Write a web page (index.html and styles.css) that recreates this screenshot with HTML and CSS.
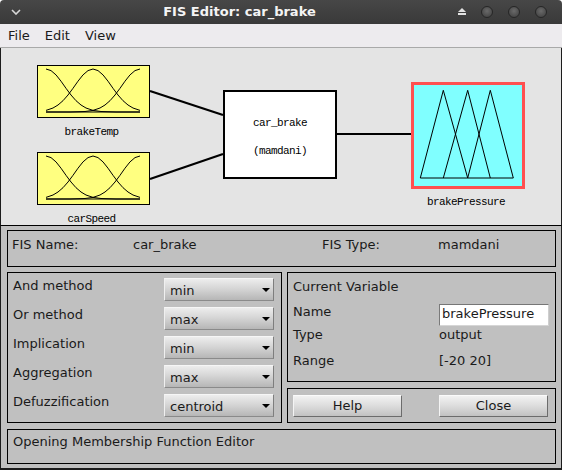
FILE: index.html
```html
<!DOCTYPE html>
<html>
<head>
<meta charset="utf-8">
<title>FIS Editor: car_brake</title>
<link rel="stylesheet" href="styles.css">
</head>
<body>
<div class="window">
  <div class="titlebar">
    <div class="tb-left">
      <svg class="chevron" width="10" height="6" viewBox="0 0 10 6"><polyline points="1,1 5,5 9,1" fill="none" stroke="#d8d8d8" stroke-width="1.6"/></svg>
    </div>
    <div class="title">FIS Editor: car_brake</div>
    <div class="controls">
      <svg class="eject" width="8" height="7" viewBox="0 0 8 7"><polygon points="0,4 4,0 8,4" fill="#e2e2e2"/><rect x="0" y="5" width="8" height="2" fill="#e2e2e2"/></svg>
      <span class="dot"></span>
      <span class="dot"></span>
      <span class="dot"></span>
    </div>
  </div>

  <div class="menubar">
    <span class="menu-item">File</span>
    <span class="menu-item">Edit</span>
    <span class="menu-item">View</span>
  </div>

  <div class="diagram">
    <svg class="wires" width="560" height="177" viewBox="0 0 560 177">
      <line x1="149" y1="43" x2="222" y2="67" stroke="#000" stroke-width="2.2"/>
      <line x1="149" y1="131" x2="222" y2="106" stroke="#000" stroke-width="2.2"/>
      <line x1="335" y1="86" x2="410" y2="86" stroke="#000" stroke-width="2.2"/>
    </svg>

    <div class="node node-temp">
      <div class="mf-box mf-in">
        <svg width="111" height="51" viewBox="0 0 111 51">
          <line x1="8" y1="46" x2="102" y2="46" stroke="#000" stroke-width="1"/>
          <polyline fill="none" stroke="#000" stroke-width="1" points="8,3 13,4.6 18,8.9 23,15.2 28,22.3 33,29 38,34.7 43,39 48,42 55,44.4 63,45.5 78,46 102,46"/>
          <polyline fill="none" stroke="#000" stroke-width="1" points="8,44.4 15,42 20,39 25,34.7 30,29 35,22.3 40,15.2 45,8.9 50,4.6 55,3 60,4.6 65,8.9 70,15.2 75,22.3 80,29 85,34.7 90,39 95,42 102,44.4"/>
          <polyline fill="none" stroke="#000" stroke-width="1" points="8,46 32,46 47,45.5 55,44.4 62,42 67,39 72,34.7 77,29 82,22.3 87,15.2 92,8.9 97,4.6 102,3"/>
        </svg>
      </div>
      <div class="node-label">brakeTemp</div>
    </div>

    <div class="node node-speed">
      <div class="mf-box mf-in">
        <svg width="111" height="51" viewBox="0 0 111 51">
          <line x1="8" y1="46" x2="102" y2="46" stroke="#000" stroke-width="1"/>
          <polyline fill="none" stroke="#000" stroke-width="1" points="8,3 13,4.6 18,8.9 23,15.2 28,22.3 33,29 38,34.7 43,39 48,42 55,44.4 63,45.5 78,46 102,46"/>
          <polyline fill="none" stroke="#000" stroke-width="1" points="8,44.4 15,42 20,39 25,34.7 30,29 35,22.3 40,15.2 45,8.9 50,4.6 55,3 60,4.6 65,8.9 70,15.2 75,22.3 80,29 85,34.7 90,39 95,42 102,44.4"/>
          <polyline fill="none" stroke="#000" stroke-width="1" points="8,46 32,46 47,45.5 55,44.4 62,42 67,39 72,34.7 77,29 82,22.3 87,15.2 92,8.9 97,4.6 102,3"/>
        </svg>
      </div>
      <div class="node-label">carSpeed</div>
    </div>

    <div class="node node-sys">
      <div class="sys-box">
        <div class="sys-line">car_brake</div>
        <div class="sys-line">(mamdani)</div>
      </div>
    </div>

    <div class="node node-out">
      <div class="mf-box mf-out">
        <svg width="108" height="101" viewBox="0 0 108 101">
          <line x1="6.3" y1="93" x2="99.3" y2="93" stroke="#000" stroke-width="1"/>
          <polyline fill="none" stroke="#000" stroke-width="1" points="6.3,93 29.3,5.3 53.7,93"/>
          <polyline fill="none" stroke="#000" stroke-width="1" points="29.3,93 53.7,5.3 76.3,93"/>
          <polyline fill="none" stroke="#000" stroke-width="1" points="53.7,93 76.3,5.3 99.3,93"/>
        </svg>
      </div>
      <div class="node-label out-label">brakePressure</div>
    </div>
  </div>

  <div class="panel">
    <div class="frame fis-frame">
      <span class="fis-c1">FIS Name:</span>
      <span class="fis-c2">car_brake</span>
      <span class="fis-c3">FIS Type:</span>
      <span class="fis-c4">mamdani</span>
    </div>

    <div class="mid">
      <div class="frame methods">
        <div class="mrow"><span class="mlabel">And method</span><div class="select"><span>min</span><i class="arrow"></i></div></div>
        <div class="mrow"><span class="mlabel">Or method</span><div class="select"><span>max</span><i class="arrow"></i></div></div>
        <div class="mrow"><span class="mlabel">Implication</span><div class="select"><span>min</span><i class="arrow"></i></div></div>
        <div class="mrow"><span class="mlabel">Aggregation</span><div class="select"><span>max</span><i class="arrow"></i></div></div>
        <div class="mrow"><span class="mlabel">Defuzzification</span><div class="select"><span>centroid</span><i class="arrow"></i></div></div>
      </div>

      <div class="rightcol">
        <div class="frame curvar">
          <div class="cv-title">Current Variable</div>
          <div class="cv-row cv-name"><span class="cv-label">Name</span><div class="input">brakePressure</div></div>
          <div class="cv-row cv-type"><span class="cv-label">Type</span><span>output</span></div>
          <div class="cv-row cv-range"><span class="cv-label">Range</span><span>[-20 20]</span></div>
        </div>
        <div class="frame buttons">
          <div class="btn">Help</div>
          <div class="btn btn-close">Close</div>
        </div>
      </div>
    </div>

    <div class="frame status">Opening Membership Function Editor</div>
  </div>
</div>
</body>
</html>
```

FILE: styles.css
```css
html, body {
  margin: 0;
  padding: 0;
  background: #ffffff;
}

.window {
  width: 562px;
  height: 470px;
  font-family: "DejaVu Sans", "Liberation Sans", sans-serif;
  font-size: 13px;
  color: #1a1a1a;
  overflow: hidden;
}

/* title bar */
.titlebar {
  height: 24px;
  display: flex;
  align-items: center;
  background: linear-gradient(#474747, #393939);
  border-radius: 4px 4px 0 0;
  color: #fff;
}
.tb-left {
  width: 24px;
  height: 24px;
  display: flex;
  align-items: center;
  padding-left: 11px;
  box-sizing: border-box;
}
.chevron { display: block; margin-top: -1px; }
.title {
  width: 431px;
  text-align: center;
  font-weight: bold;
  font-size: 13px;
  line-height: 24px;
  color: #f4f4f4;
}
.controls {
  flex: 1;
  display: flex;
  align-items: center;
  padding-left: 3px;
  gap: 15px;
}
.eject { display: block; margin-top: -1px; }
.dot {
  width: 12px;
  height: 12px;
  border-radius: 50%;
  box-sizing: border-box;
  border: 1px solid #262626;
  background: radial-gradient(circle at 50% 40%, #6a6a6a, #4a4a4a 70%);
}

/* menu */
.menubar {
  height: 24px;
  box-sizing: border-box;
  background: #edebee;
  border-bottom: 1px solid #a9a9a9;
  display: flex;
  gap: 15px;
  padding: 4px 0 0 8px;
  line-height: 15px;
  color: #1a1a1a;
}

/* diagram */
.diagram {
  position: relative;
  height: 178px;
  box-sizing: border-box;
  background: #e4e4e4;
  border-left: 1px solid #1c1c1c;
  border-right: 1px solid #1c1c1c;
  border-bottom: 1px solid #000;
}
.wires {
  position: absolute;
  left: 0;
  top: 0;
}
.node {
  position: absolute;
  display: flex;
  flex-direction: column;
  align-items: center;
}
.node-temp { left: 36px; top: 17px; }
.node-speed { left: 36px; top: 104px; }
.node-sys { left: 222px; top: 42px; }
.node-out { left: 410px; top: 34px; }

.mf-box {
  box-sizing: border-box;
}
.mf-box svg { display: block; }
.mf-in {
  width: 113px;
  height: 53px;
  background: #ffff80;
  border: 1px solid #000;
}
.mf-out {
  width: 114px;
  height: 107px;
  background: #80ffff;
  border: 3px solid #ff5050;
}
.node-label {
  font-family: "Liberation Mono", "DejaVu Sans Mono", monospace;
  font-size: 11px;
  letter-spacing: -0.6px;
  line-height: 13px;
  margin-top: 8px;
  margin-right: 4px;
  color: #000;
}
.out-label { margin-top: 7px; }

.sys-box {
  width: 114px;
  height: 89px;
  box-sizing: border-box;
  border: 2px solid #000;
  background: #fff;
  display: flex;
  flex-direction: column;
  align-items: center;
  justify-content: center;
  gap: 15px;
  padding-top: 5px;
}
.sys-line {
  font-family: "Liberation Mono", "DejaVu Sans Mono", monospace;
  font-size: 11px;
  letter-spacing: -0.6px;
  line-height: 13px;
  color: #000;
}

/* lower panel */
.panel {
  height: 244px;
  box-sizing: border-box;
  background: #c0c0c0;
  border-left: 1px solid #1c1c1c;
  border-right: 1px solid #1c1c1c;
  border-bottom: 2px solid #1c1c1c;
  padding: 4px 5px 4px 6px;
  line-height: 15px;
}
.frame {
  border: 1px solid #000;
  box-sizing: border-box;
}
.fis-frame {
  height: 37px;
  display: flex;
  padding: 6px 4px 0 4px;
}
.fis-c1 { width: 121px; }
.fis-c2 { width: 189px; }
.fis-c3 { width: 116px; }

.mid {
  display: grid;
  grid-template-columns: 275px 269px;
  gap: 5px;
  height: 151px;
  margin: 5px 0 6px;
}
.methods {
  display: flex;
  flex-direction: column;
  gap: 6px;
  padding: 5px 7px 0 5px;
}
.mrow {
  display: flex;
  height: 23px;
}
.mlabel {
  width: 151px;
  line-height: 15px;
}
.select {
  width: 110px;
  height: 23px;
  box-sizing: border-box;
  border: 1px solid;
  border-color: #f6f6f6 #7e7e7e #8a8a8a #f0f0f0;
  background: linear-gradient(#ededed, #d6d6d6 45%, #b6b6b6);
  display: flex;
  align-items: center;
  justify-content: space-between;
  padding: 0 3px 0 5px;
  line-height: 21px;
  padding-top: 1px;
}
.arrow {
  width: 0;
  height: 0;
  border-left: 4px solid transparent;
  border-right: 4px solid transparent;
  border-top: 4px solid #000;
  margin-top: -1px;
}

.rightcol {
  display: flex;
  flex-direction: column;
  gap: 6px;
}
.curvar {
  height: 110px;
  padding: 6px 0 0 5px;
}
.cv-row {
  display: flex;
}
.cv-label { width: 146px; }
.cv-name { margin-top: 10px; height: 22px; }
.cv-type { margin-top: 1px; }
.cv-range { margin-top: 11px; }
.input {
  width: 110px;
  height: 22px;
  box-sizing: border-box;
  background: #fff;
  border: 1px solid;
  border-color: #767676 #cfcfcf #d6d6d6 #7a7a7a;
  padding: 1px 0 0 2px;
  line-height: 15px;
}

.buttons {
  height: 35px;
  display: flex;
  gap: 37px;
  padding: 6px 0 0 5px;
}
.btn {
  width: 109px;
  height: 22px;
  box-sizing: border-box;
  border: 1px solid;
  border-color: #fbfbfb #6c6c6c #6c6c6c #f4f4f4;
  background: linear-gradient(#f2f2f2, #dcdcdc 50%, #c2c2c2);
  text-align: center;
  line-height: 19px;
}

.status {
  height: 35px;
  padding: 4px 0 0 5px;
}
```
